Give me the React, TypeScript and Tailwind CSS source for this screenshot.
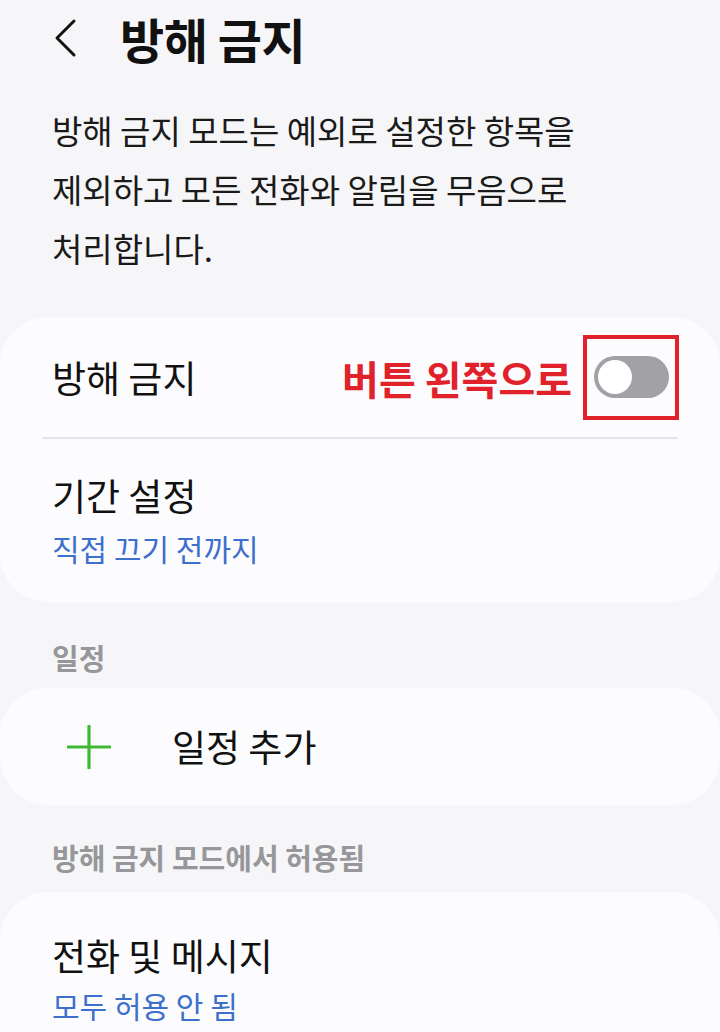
import React from "react";

const font = { fontFamily: '"Noto Sans CJK KR", "Noto Sans", sans-serif' };

function BackChevron() {
  return (
    <svg width="26" height="40" viewBox="0 0 26 40" fill="none">
      <polyline
        points="21,3 4,20 21,37"
        stroke="#111"
        strokeWidth="3"
        strokeLinecap="round"
        strokeLinejoin="round"
      />
    </svg>
  );
}

function Toggle() {
  return (
    <div className="w-[75px] h-[42px] rounded-full bg-[#a2a2a6] flex items-center pl-[4px]">
      <div className="w-[34px] h-[34px] rounded-full bg-white" />
    </div>
  );
}

function PlusIcon() {
  return (
    <svg width="44" height="44" viewBox="0 0 44 44">
      <line x1="22" y1="1" x2="22" y2="43" stroke="#3fb933" strokeWidth="3.2" strokeLinecap="round" />
      <line x1="1" y1="22" x2="43" y2="22" stroke="#3fb933" strokeWidth="3.2" strokeLinecap="round" />
    </svg>
  );
}

export default function App() {
  return (
    <div className="w-[720px] h-[1032px] overflow-hidden bg-[#f6f6f8] text-[#111]" style={font}>
      {/* Top bar */}
      <div className="h-[76px] flex items-center">
        <div className="ml-[53px] w-[26px] flex items-center">
          <BackChevron />
        </div>
        <h1 className="ml-[41px] text-[48px] font-bold leading-none tracking-[-0.5px]">방해 금지</h1>
      </div>

      {/* Description */}
      <p className="mt-[25px] px-[52px] text-[33px] leading-[59px] text-[#1a1a1a] whitespace-nowrap">
        방해 금지 모드는 예외로 설정한 항목을
        <br />
        제외하고 모든 전화와 알림을 무음으로
        <br />
        처리합니다.
      </p>

      {/* Main card */}
      <div className="mt-[39px] bg-[#fcfcfe] rounded-[48px]">
        <div className="h-[120px] flex items-center pl-[52px] pr-[41px]">
          <span className="text-[37px] leading-none flex-1">방해 금지</span>
          <span className="text-[40px] font-bold text-[#e1222b] leading-none mr-[11px] pt-[2px]">
            버튼 왼쪽으로
          </span>
          <div className="w-[96px] h-[85px] border-4 border-[#e1222b] flex items-center justify-center">
            <Toggle />
          </div>
        </div>
        <div className="mx-[42px] h-[2px] bg-[#e4e4e6]" />
        <div className="pl-[52px] pt-[36px] pb-[34px]">
          <div className="text-[37px] leading-[40px]">기간 설정</div>
          <div className="mt-[13px] text-[30px] leading-[40px] text-[#3d6fcc]">직접 끄기 전까지</div>
        </div>
      </div>

      {/* Schedule section */}
      <div className="pl-[52px] pt-[38px] pb-[14px] text-[29px] leading-[34px] font-semibold text-[#97979b]">
        일정
      </div>
      <div className="h-[117px] bg-[#fcfcfe] rounded-[48px] flex items-center pl-[67px]">
        <PlusIcon />
        <span className="ml-[61px] text-[37px] leading-none">일정 추가</span>
      </div>

      {/* Allowed section */}
      <div className="pl-[52px] pt-[35px] pb-[18px] text-[29px] leading-[34px] font-semibold text-[#97979b]">
        방해 금지 모드에서 허용됨
      </div>
      <div className="bg-[#fcfcfe] rounded-t-[48px] pl-[52px] pt-[43px] pb-[40px]">
        <div className="text-[37px] leading-[40px]">전화 및 메시지</div>
        <div className="mt-[10px] text-[30px] leading-[40px] text-[#3d6fcc]">모두 허용 안 됨</div>
      </div>
    </div>
  );
}
